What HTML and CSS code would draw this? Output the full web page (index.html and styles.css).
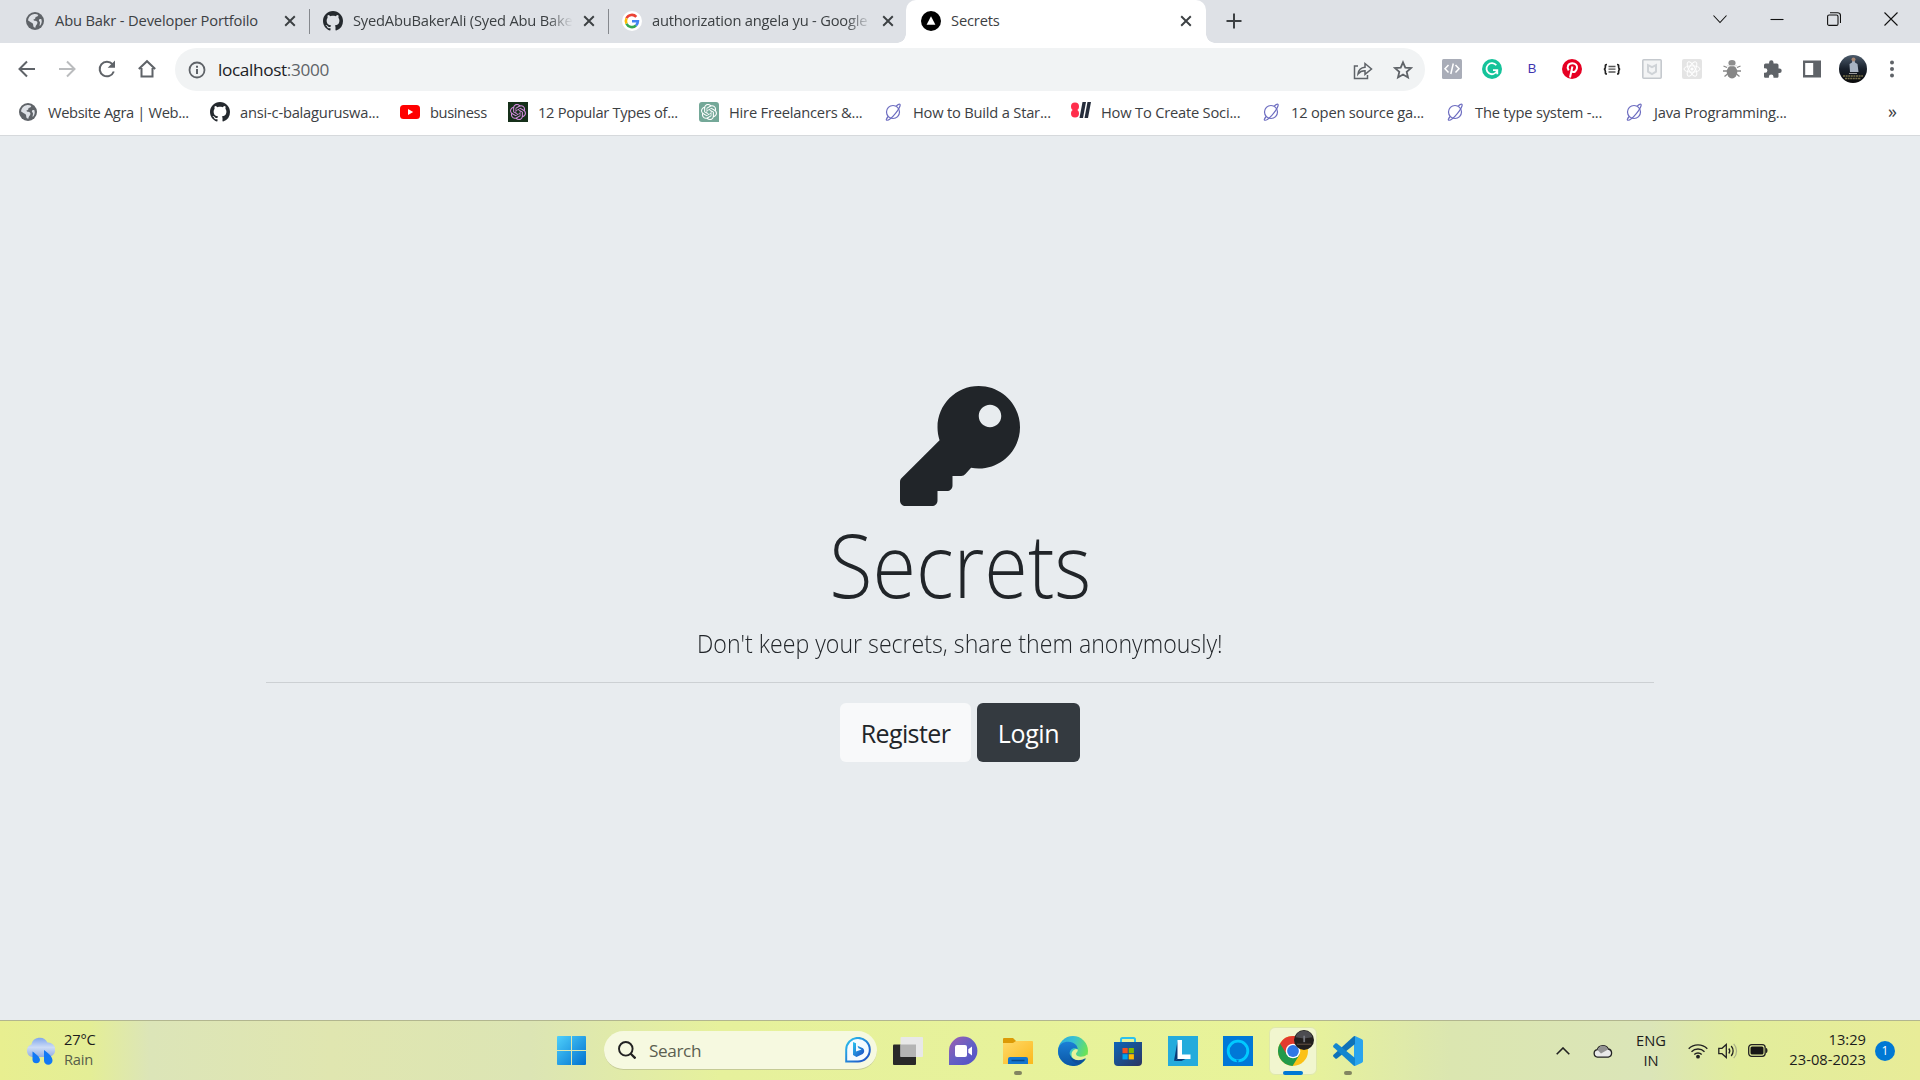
FILE: index.html
```html
<!DOCTYPE html>
<html lang="en">
<head>
<meta charset="utf-8">
<title>Secrets</title>
<link rel="stylesheet" href="styles.css">
</head>
<body>
<svg class="defs" width="0" height="0" aria-hidden="true">
  <defs>
    <symbol id="close" viewBox="0 0 10 10"><path d="M1 1l8 8M9 1l-8 8" stroke="#3c4043" stroke-width="1.6" fill="none"/></symbol>
    <symbol id="github" viewBox="0 0 16 16"><path fill="#24292e" d="M8 0C3.58 0 0 3.58 0 8c0 3.54 2.29 6.53 5.47 7.59.4.07.55-.17.55-.38 0-.19-.01-.82-.01-1.49-2.01.37-2.53-.49-2.69-.94-.09-.23-.48-.94-.82-1.13-.28-.15-.68-.52-.01-.53.63-.01 1.08.58 1.23.82.72 1.21 1.87.87 2.33.66.07-.52.28-.87.51-1.07-1.78-.2-3.64-.89-3.64-3.95 0-.87.31-1.59.82-2.15-.08-.2-.36-1.02.08-2.12 0 0 .67-.21 2.2.82.64-.18 1.32-.27 2-.27s1.36.09 2 .27c1.53-1.04 2.2-.82 2.2-.82.44 1.1.16 1.92.08 2.12.51.56.82 1.27.82 2.15 0 3.07-1.87 3.75-3.65 3.95.29.25.54.73.54 1.48 0 1.07-.01 1.93-.01 2.2 0 .21.15.46.55.38A8.01 8.01 0 0 0 16 8c0-4.42-3.58-8-8-8z"/></symbol>
    <symbol id="globe" viewBox="0 0 18 18"><circle cx="9" cy="9" r="9" fill="#5f6368"/><path fill="#dee1e6" d="M7.5 2.2c2-.4 3.600 0 4.800.9-.3 1.300-1.500 1.800-2.800 1.900.2 1.500-.8 2.200-2.100 2.500.1 1.300 1.600 1.300 2.700 1.500 1.500.3 1.600 1.700 1 2.900-.6 1.100-1.700 1.500-1.700 3.900-2.300 0-2-2.300-2.400-3.700C6.500 10.700 4.300 10.400 2.100 8.600c0-3.100 2.200-5.900 5.400-6.400zM15.400 7.200c.9 2.700 0 5.200-1.700 6.800-.3-1.400.4-2.200.3-3.400-.1-1.300-1.300-1.500-1.100-2.500.2-.9 1.500-1.300 2.500-.9z"/></symbol>
    <symbol id="planet" viewBox="0 0 16 18"><g fill="none" stroke="#6c6cc0" stroke-width="1.200"><circle cx="8" cy="9" r="6.500"/><path d="M3.200 13.500C1.300 15.800.9 17 1.700 17.200 3.500 17.600 7.500 14 10.500 10.300 14 6 16 2 14.800 1.300c-.6-.3-2 .4-3.500 1.700"/></g></symbol>
    <symbol id="knot" viewBox="0 0 24 24"><path fill="currentColor" d="M22.2819 9.8211a5.9847 5.9847 0 0 0-.5157-4.9108 6.0462 6.0462 0 0 0-6.5098-2.9A6.0651 6.0651 0 0 0 4.9807 4.1818a5.9847 5.9847 0 0 0-3.9977 2.9 6.0462 6.0462 0 0 0 .7427 7.0966 5.98 5.98 0 0 0 .511 4.9107 6.051 6.051 0 0 0 6.5146 2.9001A5.9847 5.9847 0 0 0 13.2599 24a6.0557 6.0557 0 0 0 5.7718-4.2058 5.9894 5.9894 0 0 0 3.9977-2.9001 6.0557 6.0557 0 0 0-.7475-7.0729zm-9.022 12.6081a4.4755 4.4755 0 0 1-2.8764-1.0408l.1419-.0804 4.7783-2.7582a.7948.7948 0 0 0 .3927-.6813v-6.7369l2.02 1.1686a.071.071 0 0 1 .038.052v5.5826a4.504 4.504 0 0 1-4.4945 4.4944zm-9.6607-4.1254a4.4708 4.4708 0 0 1-.5346-3.0137l.142.0852 4.783 2.7582a.7712.7712 0 0 0 .7806 0l5.8428-3.3685v2.3324a.0804.0804 0 0 1-.0332.0615L9.74 19.9502a4.4992 4.4992 0 0 1-6.1408-1.6464zM2.3408 7.8956a4.485 4.485 0 0 1 2.3655-1.9728V11.6a.7664.7664 0 0 0 .3879.6765l5.8144 3.3543-2.0201 1.1685a.0757.0757 0 0 1-.071 0l-4.8303-2.7865A4.504 4.504 0 0 1 2.3408 7.872zm16.5963 3.8558L13.1038 8.364 15.1192 7.2a.0757.0757 0 0 1 .071 0l4.8303 2.7913a4.4944 4.4944 0 0 1-.6765 8.1042v-5.6772a.79.79 0 0 0-.407-.667zm2.0107-3.0231l-.142-.0852-4.7735-2.7818a.7759.7759 0 0 0-.7854 0L9.409 9.2297V6.8974a.0662.0662 0 0 1 .0284-.0615l4.8303-2.7866a4.4992 4.4992 0 0 1 6.6802 4.66zM8.3065 12.863l-2.02-1.1638a.0804.0804 0 0 1-.038-.0567V6.0742a4.4992 4.4992 0 0 1 7.3757-3.4537l-.142.0805L8.704 5.459a.7948.7948 0 0 0-.3927.6813zm1.0976-2.3654l2.602-1.4998 2.6069 1.4998v2.9994l-2.5974 1.4997-2.6067-1.4997Z"/></symbol>
    <linearGradient id="win" x1="0" y1="0" x2="1" y2="1"><stop offset="0" stop-color="#4fd0fb"/><stop offset="1" stop-color="#0071cf"/></linearGradient>
    <linearGradient id="edgeTop" x1="0" y1="0" x2="1" y2=".4"><stop offset="0" stop-color="#2aa6dc"/><stop offset=".5" stop-color="#37c1d3"/><stop offset="1" stop-color="#6be356"/></linearGradient>
    <linearGradient id="edgeLow" x1="0" y1="0" x2="0" y2="1"><stop offset="0" stop-color="#1b7fd6"/><stop offset="1" stop-color="#0b55a4"/></linearGradient>
    <linearGradient id="chat" x1="0" y1="0" x2="1" y2="1"><stop offset="0" stop-color="#a05fb0"/><stop offset=".5" stop-color="#6560c4"/><stop offset="1" stop-color="#5050c8"/></linearGradient>
    <linearGradient id="store" x1="0" y1="0" x2="1" y2="1"><stop offset="0" stop-color="#0d66b8"/><stop offset="1" stop-color="#2c3560"/></linearGradient>
    <linearGradient id="cloud" x1="0" y1="0" x2="0" y2="1"><stop offset="0" stop-color="#7fa6ec"/><stop offset=".5" stop-color="#cddcf6"/><stop offset="1" stop-color="#93aee2"/></linearGradient>
    <linearGradient id="folder" x1="0" y1="0" x2="1" y2="1"><stop offset="0" stop-color="#ffd968"/><stop offset="1" stop-color="#fbb81c"/></linearGradient>
    <linearGradient id="bing" x1="0" y1="0" x2="1" y2="1"><stop offset="0" stop-color="#2cc4ef"/><stop offset="1" stop-color="#1c48c2"/></linearGradient>
    <linearGradient id="photo" x1="0" y1="0" x2="0" y2="1"><stop offset="0" stop-color="#4d5c6c"/><stop offset=".5" stop-color="#18202b"/><stop offset="1" stop-color="#090909"/></linearGradient>
  </defs>
</svg>

<div class="tabs">
  <div class="tab"><svg class="fav globe"><use href="#globe"/></svg><span class="title">Abu Bakr - Developer Portfoilo</span><svg class="x"><use href="#close"/></svg></div>
  <div class="tab"><svg class="fav"><use href="#github"/></svg><span class="title fade">SyedAbuBakerAli (Syed Abu Bake</span><svg class="x"><use href="#close"/></svg></div>
  <div class="tab"><svg class="fav" viewBox="0 0 20 20"><circle cx="10" cy="10" r="10" fill="#fff"/><g fill="none" stroke-width="2.600"><path stroke="#ea4335" d="M4.500 7.300A6 6 0 0 1 14.300 5.800"/><path stroke="#fbbc05" d="M4.500 12.700a6 6 0 0 1 0-5.400"/><path stroke="#34a853" d="M14 14.500a6 6 0 0 1-9.500-1.800"/><path stroke="#4285f4" d="M10 10.200h5.900a6 6 0 0 1-1.900 4.300"/></g></svg><span class="title fade">authorization angela yu - Google</span><svg class="x"><use href="#close"/></svg></div>
  <div class="tab active"><svg class="fav" viewBox="0 0 20 20"><circle cx="10" cy="10" r="10"/><path d="M10 5.200l4.400 8.600H5.600z" fill="#fff"/></svg><span class="title">Secrets</span><svg class="x"><use href="#close"/></svg></div>
  <svg class="plus" viewBox="0 0 16 16"><path d="M8 .5v15M.5 8h15" stroke="#3c4043" stroke-width="2"/></svg>
  <div class="wincontrols">
    <svg viewBox="0 0 14 14"><path d="M.5 3.500l6.500 7 6.500-7" class="ln"/></svg>
    <svg viewBox="0 0 14 14"><path d="M.5 7.500h13" class="ln"/></svg>
    <svg viewBox="0 0 14 14"><rect x=".6" y="3" width="10.400" height="10.400" rx="1.500" class="ln"/><path d="M3 .7h7.500a3 3 0 0 1 3 3V11" class="ln"/></svg>
    <svg viewBox="0 0 14 14"><path d="M.5.5l13 13M13.500.5l-13 13" class="ln"/></svg>
  </div>
</div>

<div class="toolbar">
  <div class="nav">
    <svg viewBox="0 0 20 20"><path d="M18 10H3M10 2.500L2.500 10l7.500 7.500" stroke="#5f6368" stroke-width="2" fill="none"/></svg>
    <svg viewBox="0 0 20 20"><path d="M2 10h15M10 2.500l7.500 7.500-7.500 7.500" stroke="#babcbe" stroke-width="2" fill="none"/></svg>
    <svg viewBox="0 0 20 20"><path d="M16.800 12.500A7.300 7.300 0 1 1 15.500 5.200" stroke="#5f6368" stroke-width="2" fill="none"/><path d="M18 1.500v7.300h-7.300z" fill="#5f6368"/></svg>
    <svg viewBox="0 0 20 20"><path d="M1.800 10L10 2.200 18.200 10M4.500 9v8.500h11V9" stroke="#5f6368" stroke-width="2" fill="none"/></svg>
  </div>
  <div class="omnibox">
    <svg class="info" viewBox="0 0 18 18"><circle cx="9" cy="9" r="7.500" stroke="#5f6368" stroke-width="1.800" fill="none"/><path d="M9 8v5M9 4.800v2" stroke="#5f6368" stroke-width="2"/></svg>
    <span class="url">localhost<span class="port">:3000</span></span>
    <svg class="share" viewBox="0 0 20 20"><path d="M5 6H1.500v12.500h13V15M5 14c.5-4.500 3-6.500 7-6.800V3.500L18.500 9 12 14.300v-3.500c-3-.1-5 .8-7 3.200z" stroke="#5f6368" stroke-width="1.500" fill="none"/></svg>
    <svg class="star" viewBox="0 0 20 20"><path d="M10 2.300l2.300 5.300 5.700.5-4.300 3.800 1.300 5.600-5-3-5 3 1.300-5.600L2 8.100l5.700-.5z" stroke="#5f6368" stroke-width="1.800" fill="none"/></svg>
  </div>
  <div class="exts">
    <svg viewBox="0 0 20 20"><rect width="20" height="20" rx="1.500" fill="#a9adb8"/><path d="M6.500 6L3 9.700l3.500 3.700M13.500 6L17 9.700l-3.500 3.700M11.300 4.500L8.800 15" stroke="#fff" stroke-width="1.500" fill="none"/></svg>
    <svg viewBox="0 0 20 20"><circle cx="10" cy="10" r="10" fill="#15c39a"/><path d="M14.300 6.300A5.500 5.500 0 1 0 15 12M11 11.200h4.300v4" stroke="#fff" stroke-width="1.800" fill="none"/></svg>
    <span class="bext">B</span>
    <svg viewBox="0 0 20 20"><circle cx="10" cy="10" r="10" fill="#e60023"/><path d="M6.700 11.400C4.300 8 6.300 4.300 10.300 4.300c3.300 0 5 2 4.700 4.600-.3 3-2.800 5-4.600 3.700-.8-.5-.9-1-.9-1.400M10.400 7.500L8 18.500" stroke="#fff" stroke-width="2" fill="none"/></svg>
    <svg viewBox="0 0 20 20"><path d="M5 5.500c-2 0-1.600 1-1.600 2.500S3 10 2 10.200c1 .3 1.400.7 1.400 2.200S3 15 5 15M15 5.500c2 0 1.600 1 1.600 2.500s.4 2 1.400 2.200c-1 .3-1.400.7-1.400 2.200s.4 2.600-1.600 2.600" stroke="#222" stroke-width="1.700" fill="none"/><path d="M6.500 7.500h7M6.500 10.200h7M6.500 13h7" stroke="#555" stroke-width="1.300"/></svg>
    <svg viewBox="0 0 20 20"><rect x=".8" y=".8" width="18.400" height="18.400" rx="1" fill="#f3f4f5" stroke="#c5c9ce" stroke-width="1.600"/><path d="M6 6.200l4 2 4-2v6.500l-4 2.300-4-2.300z" stroke="#cfd3d7" stroke-width="2" fill="none"/></svg>
    <svg viewBox="0 0 20 20"><rect width="20" height="20" rx="2" fill="#e4e4e4"/><g stroke="#fff" fill="none"><ellipse cx="10" cy="10" rx="8" ry="3.200"/><ellipse cx="10" cy="10" rx="8" ry="3.200" transform="rotate(60 10 10)"/><ellipse cx="10" cy="10" rx="8" ry="3.200" transform="rotate(120 10 10)"/></g><circle cx="10" cy="10" r="1.600" fill="#fff"/></svg>
    <svg viewBox="0 0 20 20"><path d="M5 8.500L1.500 7M5 12H1M5.500 15L2.500 17.500M15 8.500L18.500 7M15 12h4M14.500 15l3 2.500" stroke="#888" stroke-width="1.300" fill="none"/><ellipse cx="10" cy="13" rx="5.300" ry="6.500" fill="#868686"/><ellipse cx="10" cy="4" rx="3.600" ry="3" fill="#8d8d8d"/><path d="M5 6.800h10" stroke="#ddd"/></svg>
    <svg viewBox="0 0 20 20"><path fill="#5f6368" d="M17.500 9.500h-1V6a1.600 1.600 0 0 0-1.600-1.600H11.500v-1a2.200 2.200 0 0 0-4.400 0v1H3.600A1.600 1.600 0 0 0 2 6v3.200h1.100a2.300 2.300 0 0 1 0 4.600H2v3.400c0 .9.700 1.600 1.600 1.600h3.300v-1a2.300 2.300 0 0 1 4.600 0v1h3.400c.9 0 1.600-.7 1.600-1.600v-3.300h1a2.200 2.200 0 0 0 0-4.400z"/></svg>
    <svg viewBox="0 0 20 20"><path fill="#5f6368" fill-rule="evenodd" d="M1 1.500h18v17H1zM3.200 4v12h8V4z"/></svg>
    <svg class="avatar" viewBox="0 0 28 28"><circle cx="14" cy="14" r="14" fill="url(#photo)"/><path d="M11 17l-.5-8 2.500-1.500.4-2h2.200l.4 2L18.500 9l1 8z" fill="#a9b4c3"/><circle cx="14.500" cy="4.500" r="2" fill="#a98773"/><path d="M10 18.500h8" stroke="#999"/><path d="M4 21h20M6 23.500h16" stroke="#77704a" stroke-width="1.500" stroke-dasharray="2 .6"/></svg>
    <svg class="kebab" viewBox="0 0 20 20"><g fill="#5f6368"><circle cx="10" cy="3.500" r="2"/><circle cx="10" cy="10" r="2"/><circle cx="10" cy="16.500" r="2"/></g></svg>
  </div>
</div>

<div class="bookmarks">
  <div class="bm b1"><svg><use href="#globe" x="1" y="1" width="18" height="18"/></svg><span>Website Agra | Web...</span></div>
  <div class="bm b2"><svg><use href="#github"/></svg><span>ansi-c-balaguruswa...</span></div>
  <div class="bm b3"><svg viewBox="0 0 20 20"><rect y="3" width="20" height="14" rx="3.500" fill="red"/><path d="M8 7l5.200 3L8 13z" fill="#fff"/></svg><span>business</span></div>
  <div class="bm b4"><svg viewBox="0 0 20 20" color="#d58be0"><rect width="20" height="20" fill="#16301a"/><use href="#knot" x="2" y="2" width="16" height="16"/></svg><span>12 Popular Types of...</span></div>
  <div class="bm b5"><svg viewBox="0 0 20 20" color="#fff"><path d="M3 0h14a3 3 0 0 1 3 3v17H3a3 3 0 0 1-3-3V3a3 3 0 0 1 3-3z" fill="#74a898"/><use href="#knot" x="2" y="2" width="16" height="16"/></svg><span>Hire Freelancers &amp;...</span></div>
  <div class="bm b6"><svg><use href="#planet" x="2" y="1" width="16" height="18"/></svg><span>How to Build a Star...</span></div>
  <div class="bm b7"><svg viewBox="0 0 20 20"><circle cx="4" cy="4.500" r="4" fill="#ff2e4c"/><circle cx="4" cy="11.500" r="4" fill="#ff2e4c"/><path d="M11.500 0h3.500l-3 16H8.500zM16.500 0H20l-3 16h-3.500z" fill="#252c3b"/></svg><span>How To Create Soci...</span></div>
  <div class="bm b8"><svg><use href="#planet" x="2" y="1" width="16" height="18"/></svg><span>12 open source ga...</span></div>
  <div class="bm b9"><svg><use href="#planet" x="2" y="1" width="16" height="18"/></svg><span>The type system -...</span></div>
  <div class="bm b10"><svg><use href="#planet" x="2" y="1" width="16" height="18"/></svg><span>Java Programming...</span></div>
  <span class="more">»</span>
</div>

<main class="page">
  <div class="jumbo">
    <svg class="key" viewBox="0 0 512 512"><path fill="#212529" d="M512 176.001C512 273.203 433.202 352 336 352c-11.220 0-22.190-1.062-32.827-3.069l-24.012 27.014A23.999 23.999 0 0 1 261.223 384H224v40c0 13.255-10.745 24-24 24h-40v40c0 13.255-10.745 24-24 24H24c-13.255 0-24-10.745-24-24v-78.059c0-6.365 2.529-12.470 7.029-16.971l161.802-161.802C163.108 213.814 160 195.271 160 176 160 78.798 238.797.001 335.999 0 433.488-.001 512 78.511 512 176.001zM336 128c0 26.510 21.490 48 48 48s48-21.490 48-48-21.490-48-48-48-48 21.490-48 48z"/></svg>
    <h1>Secrets</h1>
    <p class="lead">Don't keep your secrets, share them anonymously!</p>
    <hr>
    <div class="buttons"><a class="btn light">Register</a><a class="btn dark">Login</a></div>
  </div>
</main>

<div class="taskbar">
  <div class="weather">
    <svg viewBox="0 0 30 28"><path d="M7 20a6.500 6.500 0 0 1-.6-12.500 8.500 8.500 0 0 1 16-2A7.300 7.300 0 1 1 22 20z" fill="url(#cloud)"/><path d="M7.500 14.500c4 3 7.500 5.500 7.500 8.500a3.800 3.800 0 0 1-7.500 0zM19 13c4.500 3.500 8.500 6.500 8.500 10.500a4.200 4.200 0 0 1-8.500 0z" fill="#1279f5"/></svg>
    <div class="lines"><span class="temp">27°C</span><span class="rain">Rain</span></div>
  </div>
  <div class="apps">
    <svg class="ic start" viewBox="0 0 29 29"><path fill="url(#win)" d="M1 0h13v14H0V1a1 1 0 0 1 1-1zM15 0h13a1 1 0 0 1 1 1v13H15zM0 15h14v14H1a1 1 0 0 1-1-1zM15 15h14v13a1 1 0 0 1-1 1H15z"/></svg>
    <div class="search">
      <svg viewBox="0 0 18 18"><circle cx="7.800" cy="7.800" r="6.800" stroke="#222" stroke-width="1.900" fill="none"/><path d="M12.500 12.500l5 5" stroke="#222" stroke-width="2.300"/></svg>
      <span>Search</span>
      <svg class="bing" viewBox="0 0 26 26"><path d="M1.200 24.500V13A11.800 11.800 0 1 1 13 24.500z" stroke="url(#bing)" stroke-width="2" fill="#f6fbff"/><path d="M8 5l3 1.200v8.300l5.500-2-3-1.200-1-2.500 5.500 2.500c1.800 1.700 1.600 4.300-.3 5.700L11.500 20 8 18z" fill="url(#bing)"/></svg>
    </div>
    <svg class="ic tv" viewBox="0 0 30 30"><rect y="8.500" width="23" height="20.500" rx="1" fill="#292929"/><rect x="7.500" y="1" width="22.500" height="20" rx="1" fill="#e8e8e8"/><path d="M7.500 8.500H23V21H7.500z" fill="#b4b4b4"/></svg>
    <svg class="ic" viewBox="0 0 30 30"><path d="M1 29V15a14.200 14.200 0 1 1 14.200 14z" fill="url(#chat)"/><rect x="7" y="9" width="12" height="12" rx="2" fill="#fff"/><path d="M20.300 13.300L24 10.500v9l-3.700-2.800z" fill="#fff"/></svg>
    <div class="app dot"><svg class="ic" viewBox="0 0 30 30"><path d="M1 2h9l3 3v3H0V3a1 1 0 0 1 1-1z" fill="#dc9a06"/><path d="M10 7l3-2h16a1 1 0 0 1 1 1v22H0V7z" fill="url(#folder)"/><path d="M5 28v-5a2 2 0 0 1 2-2h16a2 2 0 0 1 2 2v5z" fill="#1376cf"/><path d="M8.500 24.500h13" stroke="#064a8e" stroke-width="1.500"/></svg></div>
    <svg class="ic" viewBox="0 0 30 30"><circle cx="15" cy="15" r="15" fill="url(#edgeTop)"/><path d="M0 15C.5 8 5 5.800 10.500 5.800c5.500 0 9.300 3.700 9.300 8-3.300-3.500-9-.5-8 5 1 5.800 9.500 7.700 16 4-4.500 6.500-9 7.200-12.800 7.200A15 15 0 0 1 0 15z" fill="url(#edgeLow)"/><path d="M19.800 13.500c.3 2.500-2 3.200-1.800 4.500.5 3.500 8 3.600 11 .5 1.500 1 2 3-1.200 4.300-6.500 3.700-14 1.300-14.300-4 0-3.800 3-6.500 6.300-5.300z" fill="#e8f29b"/><path d="M11.800 17c.3 7 9 9.300 16 5-1 2.500-4 5-6.500 6-5 0-10.500-5-9.500-11z" fill="#0d4f9c"/></svg>
    <svg class="ic" viewBox="0 0 30 30"><path d="M8 8V3.500a1.500 1.500 0 0 1 1.500-1.500h11A1.500 1.500 0 0 1 22 3.500V8" stroke="#2bc1ee" stroke-width="2" fill="none"/><path d="M1 6h28v20a4 4 0 0 1-4 4H5a4 4 0 0 1-4-4z" fill="url(#store)"/><path fill="#f25022" d="M9.500 12h5.200v5.200H9.500z"/><path fill="#7fba00" d="M15.700 12h5.200v5.200h-5.200z"/><path fill="#00a4ef" d="M9.500 18.200h5.200v5.200H9.500z"/><path fill="#ffb900" d="M15.700 18.200h5.200v5.200h-5.200z"/></svg>
    <svg class="ic" viewBox="0 0 30 30"><path fill="#24abdc" d="M0 0h30v30H0z"/><path fill="#083a78" d="M9.500 5L6 25l5-3z"/><path d="M9.500 4H14v14.500h8.500V23H9.500z" fill="#fff"/><path fill="#083a78" d="M6 25l3.500-2h8l-4 2z"/></svg>
    <svg class="ic" viewBox="0 0 30 30"><path fill="#0078d7" d="M0 0h30v30H0z"/><circle cx="15" cy="15" r="9.800" stroke="#00caff" stroke-width="2.800" fill="none"/><path d="M13 23.500l1.500 3.500 1.500-2.500z" fill="#0078d7"/></svg>
    <div class="app current">
      <svg class="ic" viewBox="0 0 30 30"><circle cx="15" cy="15" r="15" fill="#fbc116"/><path d="M15 15L2 7.500A15 15 0 0 0 14.500 30L22 18z" fill="#229a4a"/><path d="M15 8h13.200a15 15 0 0 0-26.200-.5L8.500 18z" fill="#e33b2e"/><circle cx="15" cy="15" r="7.300" fill="#fff"/><circle cx="15" cy="15" r="5.900" fill="#2f77e5"/></svg>
      <svg class="badge-photo" viewBox="0 0 28 28"><circle cx="14" cy="14" r="14" fill="#221f1e"/><path d="M2 10a12.500 12.500 0 0 1 24 0L14 12z" fill="#4c4c50"/><path d="M13 17V8h2.500v9z" fill="#75777f"/><path d="M4 20h20" stroke="#514338" stroke-width="2"/></svg>
    </div>
    <div class="app dot"><svg class="ic" viewBox="0 0 30 30"><path d="M22 0l7 3.200c.7.300 1 .9 1 1.500v20.600c0 .6-.3 1.200-1 1.500L22 30l-1-1V1z" fill="#2aa4ee"/><path d="M22 0v8L4 22.500c-.6.400-1.200.4-1.700 0L.5 20.800c-.6-.6-.6-1.400 0-2L20.500.6z" fill="#0f72b8"/><path d="M22 30v-8L4 7.500c-.6-.4-1.200-.4-1.700 0L.5 9.200c-.6.600-.6 1.400 0 2l20 18.200z" fill="#1386cf"/></svg></div>
  </div>
  <div class="tray">
    <svg class="chev" viewBox="0 0 14 8"><path d="M.7 7.300L7 1l6.300 6.300" stroke="#222" stroke-width="1.600" fill="none"/></svg>
    <svg class="cl" viewBox="0 0 20 14"><path d="M4.500 13.200a3.800 3.800 0 0 1-.3-7.500A6 6 0 0 1 15.300 5a4.200 4.200 0 0 1 0 8.200z" fill="#e9e9e9" stroke="#222" stroke-width="1.300"/><path d="M4.500 6A5.500 5.500 0 0 1 15 5.500L8 9.500z" fill="#929292"/></svg>
    <div class="lang"><span>ENG</span><span>IN</span></div>
    <svg class="wifi" viewBox="0 0 20 16"><g stroke="#222" fill="none" stroke-width="1.400"><path d="M.7 5.800a13 13 0 0 1 18.600 0M3.500 8.700a9.300 9.300 0 0 1 13 0M6.300 11.500a5.300 5.300 0 0 1 7.400 0"/></g><circle cx="10" cy="13.700" r="1.900" fill="#222"/></svg>
    <svg class="vol" viewBox="0 0 20 16"><path d="M.8 5.300H4L8.300 1.500v13L4 10.700H.8z" stroke="#222" stroke-width="1.300" fill="none"/><path d="M10.800 5.500a4 4 0 0 1 0 5M13.200 3a7.500 7.500 0 0 1 0 10" stroke="#222" stroke-width="1.300" fill="none"/><path d="M15.700.8a10.500 10.500 0 0 1 0 14.400" stroke="#aab089" stroke-width="1.200" fill="none"/></svg>
    <svg class="bat" viewBox="0 0 20 13"><rect x=".7" y=".7" width="16.500" height="11.600" rx="3" stroke="#222" stroke-width="1.300" fill="none"/><rect x="2.500" y="2.500" width="13" height="8" rx="1.500" fill="#161616"/><path d="M18 4c2 .3 2 4.700 0 5z" fill="#222"/></svg>
    <div class="clock"><span class="time">13:29</span><span class="date">23-08-2023</span></div>
    <div class="badge">1</div>
  </div>
</div>
</body>
</html>
```
FILE: styles.css
```css
* { box-sizing: border-box; }
body {
  margin: 0;
  width: 1920px;
  height: 1080px;
  overflow: hidden;
  display: flex;
  flex-direction: column;
  font-family: "Open Sans", "Noto Sans", sans-serif;
  font-size: 14.7px;
  color: #3c4043;
}
svg { display: block; flex: none; }
span { white-space: nowrap; }
.defs { position: absolute; }

.tabs { height: 43px; background: #dee1e6; display: flex; align-items: center; padding-left: 8px; }
.tab { width: 299px; height: 43px; display: flex; align-items: center; padding: 0 15px 2px 16px; position: relative; }
.tab:nth-child(-n+2)::after { content: ""; position: absolute; right: -3px; top: 9px; width: 1px; height: 25px; background: #85888d; }
.fav { width: 20px; height: 20px; margin-right: 10px; }
.fav.globe { width: 18px; height: 18px; margin: 0 11px 0 2px; }
.title { width: 220px; margin-right: auto; padding-bottom: 1px; letter-spacing: -.16px; }
.fade { letter-spacing: -.2px; mask-image: linear-gradient(90deg, #000 88%, transparent); }
.x { width: 12px; height: 12px; margin-right: -4px; }
.tab.active { background: #fff; width: 300px; margin-left: 1px; padding: 0 18px 2px 15px; border-radius: 10px 10px 0 0; }
.tab.active::before, .tab.active::after { content: ""; position: absolute; bottom: 0; width: 9px; height: 9px; }
.tab.active::before { left: -9px; background: radial-gradient(circle at 0 0, transparent 8.5px, #fff 9px); }
.tab.active::after { right: -9px; background: radial-gradient(circle at 100% 0, transparent 8.5px, #fff 9px); }
.plus { width: 16px; height: 16px; margin: 0 0 1px 20px; }
.wincontrols { margin-left: auto; display: flex; gap: 43px; padding: 0 22px 6px 0; }
.wincontrols svg { width: 14px; height: 14px; }
.ln { fill: none; stroke: #111; stroke-width: 1.1; }

.toolbar { height: 50px; background: #fff; display: flex; align-items: center; padding-top: 3px; }
.nav { display: flex; gap: 20px; width: 175px; padding: 0 0 2px 17px; }
.nav svg { width: 20px; height: 20px; }
.omnibox { width: 1250px; height: 43px; border-radius: 22px; background: #f1f3f4; display: flex; align-items: center; padding: 0 12px 0 13px; }
.info { width: 18px; height: 18px; margin-right: 12px; }
.url { font-size: 17.2px; letter-spacing: -.35px; color: #202124; }
.port { color: #5f6368; }
.share { width: 20px; height: 20px; margin-left: auto; margin-right: 20px; }
.star { width: 20px; height: 20px; }
.exts { display: flex; align-items: center; gap: 20px; margin-left: 17px; padding-bottom: 2px; }
.exts svg { width: 20px; height: 20px; }
.bext { width: 20px; text-align: center; font: 13px "Liberation Sans", sans-serif; color: #3f35b0; }
.exts .avatar { width: 28px; height: 28px; margin: 0 -3px; }
.exts .kebab { margin-left: -2px; }

.bookmarks { height: 43px; background: #fff; border-bottom: 1px solid #d6d9dc; display: flex; padding: 0 23px 4px 18px; align-items: center; }
.bm { display: flex; align-items: center; gap: 10px; letter-spacing: -.21px; }
.bm svg { width: 20px; height: 20px; }
.b1 { width: 192px; letter-spacing: -.36px; } .b2 { width: 190px; } .b3 { width: 108px; letter-spacing: -.4px; } .b4 { width: 191px; letter-spacing: -.32px; }
.b5 { width: 184px; } .b6 { width: 188px; } .b7 { width: 190px; } .b8 { width: 184px; } .b9 { width: 179px; } .b10 { width: 190px; }
.more { margin-left: auto; font-size: 18px; line-height: 20px; padding-bottom: 3px; }

.page { flex: 1; background: #e8ecef; display: flex; justify-content: center; }
.jumbo { width: 1388px; padding-top: 250px; display: flex; flex-direction: column; align-items: center; color: #212529; }
.key { width: 120px; height: 120px; }
h1 { margin: 4px 0 0; font-size: 89px; font-weight: 300; line-height: 107px; transform: scaleX(.89); }
.lead { margin: 7px 0 0; font-size: 25px; font-weight: 300; line-height: 38px; white-space: nowrap; transform: scaleX(.926); }
hr { width: 100%; border: 0; border-top: 1px solid #ccd0d3; margin: 20px 0 20px; }
.buttons { display: flex; gap: 6px; }
.btn { height: 59px; border-radius: 6px; font-size: 25px; line-height: 61px; text-align: center; letter-spacing: -.6px; }
.light { width: 131px; background: #f8f9fa; color: #212529; }
.dark { width: 103px; background: #343a40; color: #fff; letter-spacing: -.4px; }

.taskbar {
  height: 60px; border-top: 1px solid #b2b68f; display: flex; position: relative;
  background: linear-gradient(90deg, #e8ef90 0, #e4ee96 90px, #dce5b8 150px, #e0e6b0 330px, #dce5b4 530px, #e6f19c 720px, #e8f399 1300px, #dbe6b0 1450px, #dbe5b8 1650px, #e2ed9c 1740px, #e8ec98 1920px);
  color: #1c1c1c;
}
.weather { display: flex; width: 557px; padding: 16px 0 0 25px; gap: 9px; }
.weather svg { width: 30px; height: 28px; }
.lines { display: flex; flex-direction: column; margin-top: -8px; line-height: 20px; letter-spacing: -.2px; }
.rain { color: #58604a; }
.apps { display: flex; align-items: center; gap: 25px; }
.ic { width: 30px; height: 30px; }
.start { width: 29px; height: 29px; margin-right: -7px; }
.search { width: 273px; height: 39px; border-radius: 20px; background: #f6f9e0; border-bottom: 1px solid #c5cb95; display: flex; align-items: center; padding: 0 6px 0 14px; font-size: 17.2px; letter-spacing: -.4px; color: #5c5f50; margin-right: -9px; }
.search svg { width: 18px; height: 18px; margin-right: 13px; }
.search .bing { width: 26px; height: 26px; margin: 0 0 0 auto; }
.app { position: relative; }
.dot::after { content: ""; position: absolute; left: 11px; top: 35px; width: 8px; height: 4px; border-radius: 2px; background: #828560; }
.current { width: 48px; height: 48px; margin: 0 -9px; padding: 8px; border-radius: 6px; background: #f1f6cf; border: 1px solid #dfe8ac; }
.current::after { content: ""; position: absolute; left: 13px; top: 43px; width: 20px; height: 4px; border-radius: 2px; background: #0078d4; }
.badge-photo { position: absolute; left: 24px; top: 2px; width: 20px; height: 20px; }
.tray { display: flex; align-items: center; margin-left: auto; padding-right: 25px; line-height: 20px; }
.chev { width: 14px; height: 8px; margin-right: 23px; }
.cl { width: 20px; height: 14px; margin-right: 20px; }
.lang { width: 36px; display: flex; flex-direction: column; align-items: center; margin-right: 19px; padding-bottom: 2px; }
.wifi { width: 20px; height: 16px; margin-right: 10px; }
.vol { width: 20px; height: 16px; margin-right: 10px; }
.bat { width: 20px; height: 13px; }
.clock { display: flex; flex-direction: column; align-items: flex-end; width: 98px; margin-right: 9px; padding-bottom: 4px; }
.badge { width: 20px; height: 20px; border-radius: 50%; background: #0078d4; color: #fff; font-size: 12px; text-align: center; line-height: 20px; }
```
